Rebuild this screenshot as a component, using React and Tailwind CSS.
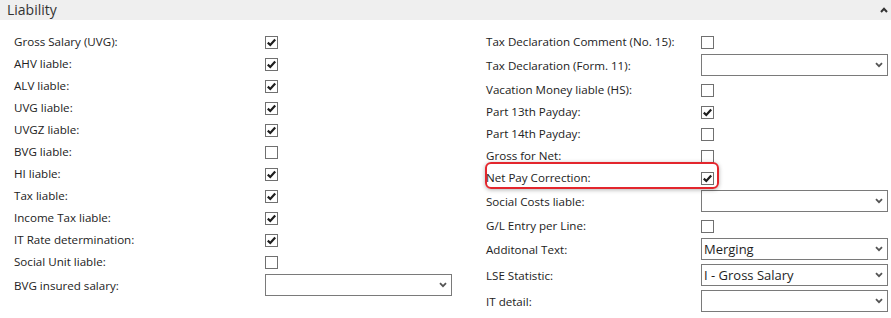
import React from "react";

const leftRows = [
  { label: "Gross Salary (UVG):", type: "check", checked: true },
  { label: "AHV liable:", type: "check", checked: true },
  { label: "ALV liable:", type: "check", checked: true },
  { label: "UVG liable:", type: "check", checked: true },
  { label: "UVGZ liable:", type: "check", checked: true },
  { label: "BVG liable:", type: "check", checked: false },
  { label: "HI liable:", type: "check", checked: true },
  { label: "Tax liable:", type: "check", checked: true },
  { label: "Income Tax liable:", type: "check", checked: true },
  { label: "IT Rate determination:", type: "check", checked: true },
  { label: "Social Unit liable:", type: "check", checked: false },
  { label: "BVG insured salary:", type: "select", value: "" },
];

const rightRows = [
  { label: "Tax Declaration Comment (No. 15):", type: "check", checked: false },
  { label: "Tax Declaration (Form. 11):", type: "select", value: "" },
  { label: "Vacation Money liable (HS):", type: "check", checked: false },
  { label: "Part 13th Payday:", type: "check", checked: true },
  { label: "Part 14th Payday:", type: "check", checked: false },
  { label: "Gross for Net:", type: "check", checked: false },
  { label: "Net Pay Correction:", type: "check", checked: true },
  { label: "Social Costs liable:", type: "select", value: "" },
  { label: "G/L Entry per Line:", type: "check", checked: false },
  { label: "Additonal Text:", type: "select", value: "Merging" },
  { label: "LSE Statistic:", type: "select", value: "I - Gross Salary" },
  { label: "IT detail:", type: "select", value: "" },
];

const CheckBox = ({ checked }) => (
  <div className="w-[13px] h-[13px] border border-[#707070] bg-white flex items-center justify-center">
    {checked && (
      <svg width="11" height="11" viewBox="0 0 11 11">
        <path d="M1.8 5.6 L4.3 8 L9.2 2.6" fill="none" stroke="#1e1e1e" strokeWidth="2.2" />
      </svg>
    )}
  </div>
);

const Select = ({ value }) => (
  <div className="mt-[1px] mb-[3px] w-[187px] h-[22px] border border-[#7a7a7a] bg-white flex items-center justify-between pl-[2px] pr-[4px]">
    <span className="text-[13px] text-[#1e1e1e] leading-none">{value}</span>
    <svg width="8" height="6" viewBox="0 0 8 6">
      <path d="M1 1.2 L4 4.2 L7 1.2" fill="none" stroke="#555" strokeWidth="1.8" />
    </svg>
  </div>
);

const Row = ({ row, labelWidth }) => (
  <div className={`flex items-center ${row.type === "check" ? "h-[22px]" : ""}`}>
    <div className="shrink-0 text-[11.6px] text-[#222]" style={{ width: labelWidth }}>
      {row.label}
    </div>
    {row.type === "check" ? <CheckBox checked={row.checked} /> : <Select value={row.value} />}
  </div>
);

export default function App() {
  return (
    <div className="w-[891px] h-[318px] bg-white" style={{ fontFamily: '"Open Sans", "Liberation Sans", sans-serif' }}>
      <div className="h-[20px] bg-[#efefef] flex items-center justify-between pl-[7px] pr-[3px]">
        <span className="text-[14px] text-[#333] leading-none">Liability</span>
        <svg width="8" height="6" viewBox="0 0 8 6">
          <path d="M1 5 L4 1.8 L7 5" fill="none" stroke="#333" strokeWidth="2" />
        </svg>
      </div>
      <div className="relative flex pt-[11px] pl-[14px]">
        <div className="flex flex-col w-[472px]">
          {leftRows.map((r) => (
            <Row key={r.label} row={r} labelWidth={251} />
          ))}
        </div>
        <div className="flex flex-col">
          {rightRows.map((r) => (
            <Row key={r.label} row={r} labelWidth={215} />
          ))}
        </div>
        <div className="absolute left-[485px] top-[142px] w-[234px] h-[27px] border-2 border-[#e3262d] rounded-[6px] shadow-[0_1px_4px_rgba(0,0,0,0.3)]" />
      </div>
    </div>
  );
}
